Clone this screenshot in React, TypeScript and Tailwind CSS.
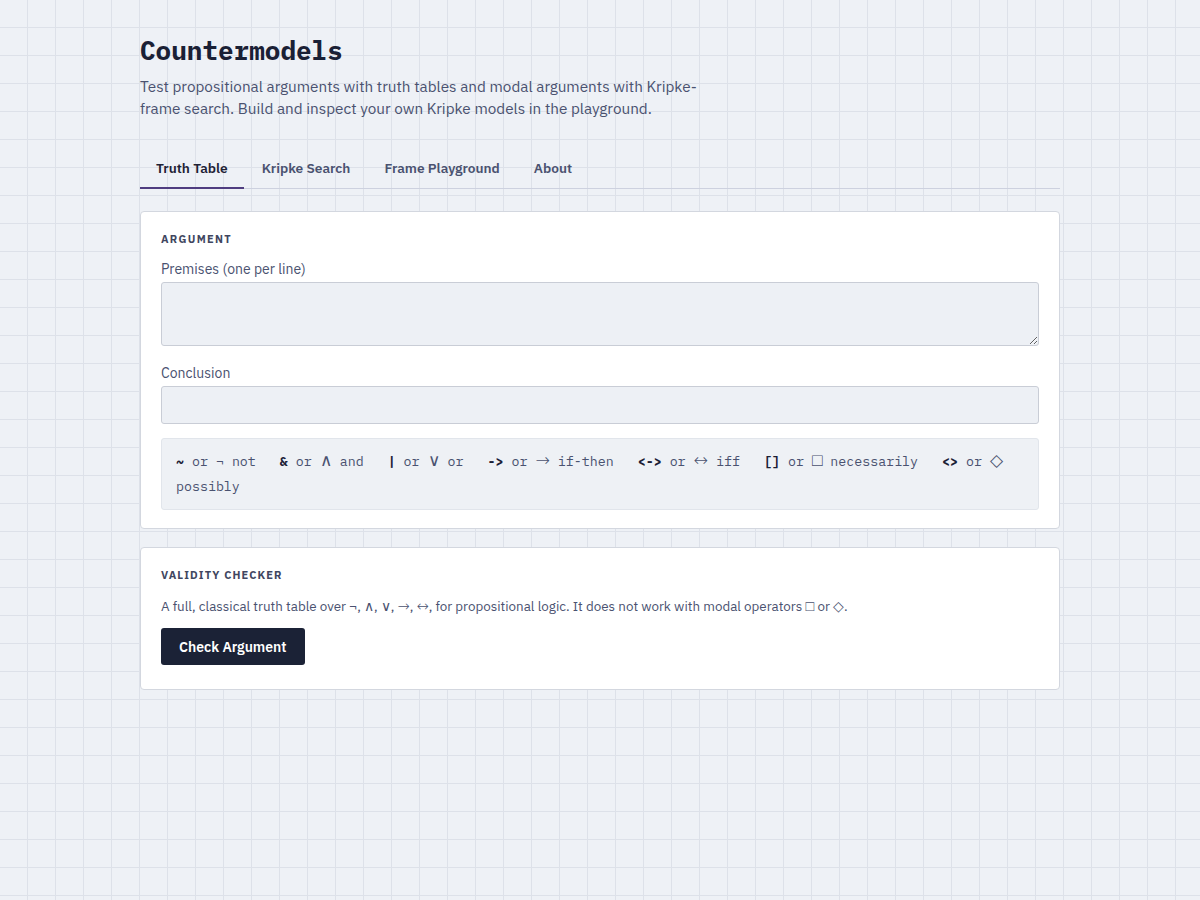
import { useState } from 'react'

const tabs = ['Truth Table', 'Kripke Search', 'Frame Playground', 'About']

// operator cheat-sheet: ascii form, unicode form, reading
const symbols = [
  { ascii: '~', glyph: '¬', label: 'not' },
  { ascii: '&', glyph: '∧', label: 'and' },
  { ascii: '|', glyph: '∨', label: 'or' },
  { ascii: '->', glyph: '→', label: 'if-then' },
  { ascii: '<->', glyph: '↔', label: 'iff' },
  { ascii: '[]', glyph: '□', label: 'necessarily' },
  { ascii: '<>', glyph: '◇', label: 'possibly' },
]

// logic glyphs come from a symbol font, a bit larger and thinner than the text
function Sym({ children, big }: { children: string; big?: boolean }) {
  return (
    <span
      className={`font-['DejaVu_Sans',sans-serif] font-extralight leading-[0] ${
        big ? 'text-[1.3em]' : 'text-[1.08em]'
      }`}
    >
      {children}
    </span>
  )
}

export default function App() {
  const [active, setActive] = useState('Truth Table')
  const [premises, setPremises] = useState('')
  const [conclusion, setConclusion] = useState('')

  return (
    <main className="min-h-screen bg-[#eef1f6] bg-[linear-gradient(to_right,#dde1e9_1px,transparent_1px),linear-gradient(to_bottom,#dde1e9_1px,transparent_1px)] bg-[size:28px_28px] bg-[position:-1px_-1px] font-['IBM_Plex_Sans','Noto_Sans',sans-serif] text-[#4a5270]">
      <div className="mx-auto w-[920px] pt-[33px] pb-16">
        <h1 className="font-['IBM_Plex_Mono','Liberation_Mono',monospace] text-[26px] font-bold leading-[34px] text-[#1a2035]">
          Countermodels
        </h1>
        <p className="mt-[8px] max-w-[580px] text-[15.3px] leading-[22px] text-[#4a5270]">
          Test propositional arguments with truth tables and modal arguments with Kripke-frame search. Build and inspect your own Kripke models in the playground.
        </p>

        {/* tabs */}
        <nav className="mt-[30px] flex gap-[2px] border-b border-[#cdd1df]">
          {tabs.map((t) => (
            <button
              key={t}
              onClick={() => setActive(t)}
              className={`-mb-px px-4 pt-[9px] pb-[9px] text-[13.7px] font-semibold leading-[20px] border-b-2 ${
                active === t ? 'border-[#4f3d80] text-[#1e2235]' : 'border-transparent text-[#4a5270]'
              }`}
            >
              {t}
            </button>
          ))}
        </nav>

        {/* argument card */}
        <section className="mt-[22px] rounded-[4px] border border-[#d3d7df] bg-white px-5 pt-[19px] pb-[18px]">
          <h2 className="text-[11px] font-bold uppercase leading-[16px] tracking-[0.12em] text-[#3f4660]">Argument</h2>
          <label className="mt-[12px] block text-[14px] leading-[20px] text-[#4a5270]">Premises (one per line)</label>
          <textarea
            value={premises}
            onChange={(e) => setPremises(e.target.value)}
            className="mt-[3px] block h-[64px] w-full rounded-[3px] border border-[#c9cdd6] bg-[#edf0f5] px-3 py-2 font-['IBM_Plex_Mono','Liberation_Mono',monospace] text-[13px] outline-none"
          />
          <label className="mt-[17px] block text-[14px] leading-[20px] text-[#4a5270]">Conclusion</label>
          <input
            value={conclusion}
            onChange={(e) => setConclusion(e.target.value)}
            className="mt-[3px] block h-[38px] w-full rounded-[3px] border border-[#c9cdd6] bg-[#edf0f5] px-3 font-['IBM_Plex_Mono','Liberation_Mono',monospace] text-[13px] outline-none"
          />
          <div className="mt-[14px] rounded-[3px] border border-[#e1e5eb] bg-[#eef1f5] px-[14px] py-[10px] font-['IBM_Plex_Mono','Liberation_Mono',monospace] text-[13.3px] leading-[25px] text-[#4a5270]">
            {symbols.map((s) => (
              <span key={s.ascii} className="mr-6">
                <b className="font-bold text-[#1a2035]">{s.ascii}</b> or{' '}
                {s.glyph === '¬' ? s.glyph : <Sym big>{s.glyph}</Sym>} {s.label}
              </span>
            ))}
          </div>
        </section>

        {/* checker card */}
        <section className="mt-[18px] rounded-[4px] border border-[#d3d7df] bg-white px-5 pt-[19px] pb-[24px]">
          <h2 className="text-[11px] font-bold uppercase leading-[16px] tracking-[0.1em] text-[#3f4660]">Validity Checker</h2>
          <p className="mt-[14px] text-[13.4px] leading-[18px] text-[#4a5270]">
            A full, classical truth table over ¬, <Sym>∧</Sym>, <Sym>∨</Sym>, <Sym>→</Sym>, <Sym>↔</Sym>, for propositional logic. It does not work with modal operators <Sym>□</Sym> or <Sym>◇</Sym>.
          </p>
          <button className="mt-[13px] h-[37px] rounded-[3px] bg-[#1b2236] px-[18px] pt-[2px] text-[14px] font-semibold text-white">
            Check Argument
          </button>
        </section>
      </div>
    </main>
  )
}
